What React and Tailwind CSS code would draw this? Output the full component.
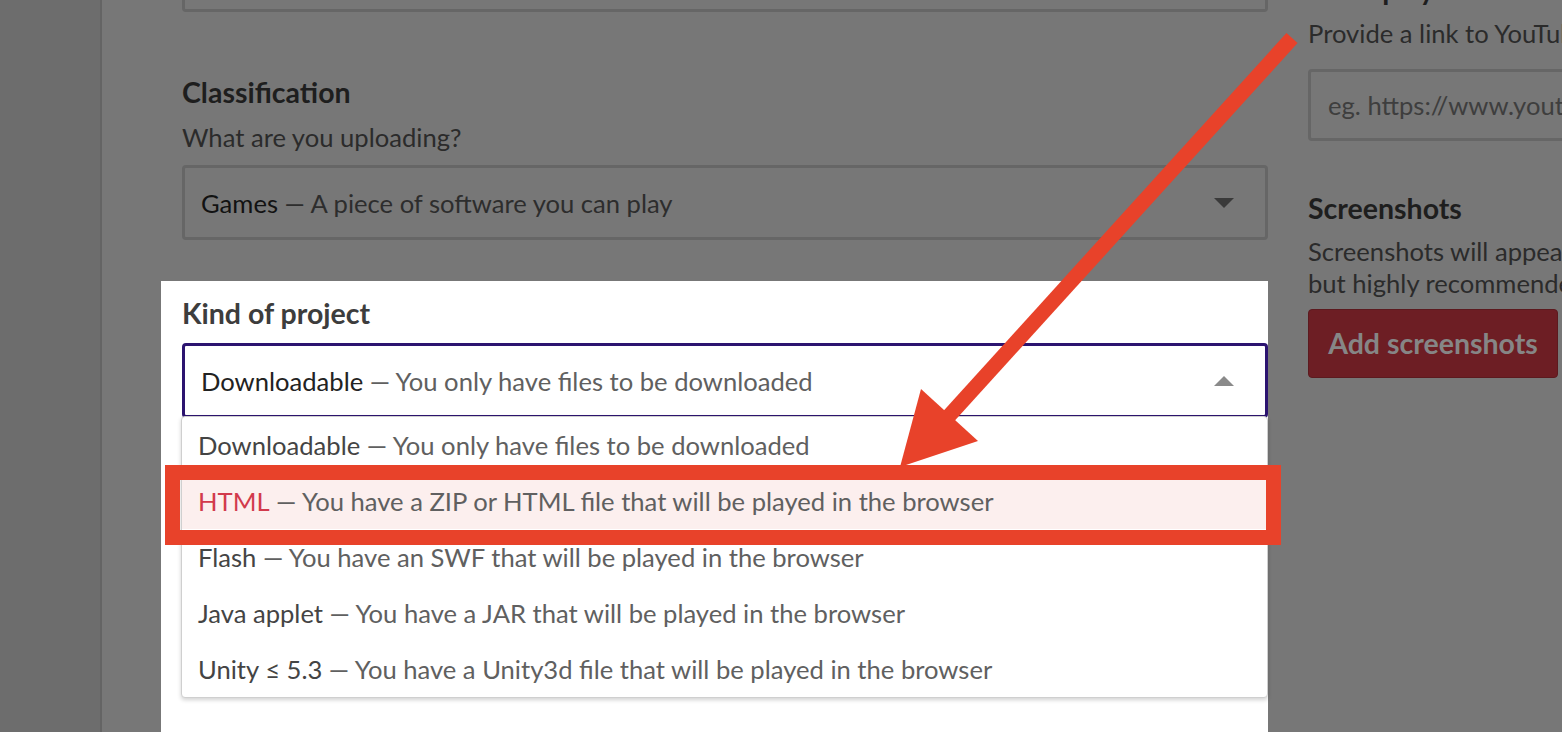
const kinds = [
  { label: "Downloadable", desc: "You only have files to be downloaded" },
  { label: "HTML", desc: "You have a ZIP or HTML file that will be played in the browser", active: true },
  { label: "Flash", desc: "You have an SWF that will be played in the browser" },
  { label: "Java applet", desc: "You have a JAR that will be played in the browser" },
  { label: "Unity ≤ 5.3", desc: "You have a Unity3d file that will be played in the browser" },
]

const Caret = ({ up, color }) => (
  <svg width="20" height="10" viewBox="0 0 20 10" className="shrink-0">
    <polygon points={up ? "0,10 20,10 10,0" : "0,0 20,0 10,10"} fill={color} />
  </svg>
)

const KindDropdown = () => (
  <div className="absolute left-[20px] top-[135px] w-[1087px] rounded-[4px] border border-[#cfcfcf] bg-white shadow-[0_2px_4px_rgba(0,0,0,0.18)]">
    {kinds.map((k) => (
      <div
        key={k.label}
        className={`flex h-[56px] items-center pl-4 text-[25.6px] leading-8 ${k.active ? "bg-[#fcefee]" : ""}`}
      >
        <span className={k.active ? "text-[#d23a4c]" : "text-[#444]"}>{k.label}</span>
        <span className="text-[#606060]">&nbsp;— {k.desc}</span>
      </div>
    ))}
  </div>
)

export default function App() {
  return (
    <div className="relative flex h-[732px] w-[1562px] overflow-hidden bg-[#777] font-['Lato',sans-serif]">
      <div className="w-[102px] shrink-0 border-r-2 border-[#646464] bg-[#6d6d6d]" />

      <div className="flex flex-1 gap-10 pl-[80px]">
        {/* left column */}
        <div className="flex w-[1086px] shrink-0 flex-col">
          <div className="h-[12px] rounded-b-[4px] border-x-[3px] border-b-[3px] border-[#666]" />

          <h2 className="mt-[64px] text-[28.5px] font-bold leading-8 text-[#1e1e1e]">Classification</h2>
          <p className="mt-[13px] text-[25.6px] leading-8 text-[#2b2b2b]">What are you uploading?</p>
          <div className="mt-[12px] flex h-[75px] items-center justify-between rounded-[4px] border-[3px] border-[#666] pl-4 pr-[31px] text-[25.6px] leading-8">
            <div>
              <span className="text-[#121212]">Games</span>
              <span className="text-[#2d2d2d]">&nbsp;— A piece of software you can play</span>
            </div>
            <Caret color="#3a3a3a" />
          </div>

          <div className="relative mt-[41px] -ml-[21px] flex-1 bg-white pl-[21px]">
            <h2 className="pt-[16px] text-[28.5px] font-bold leading-8 text-[#3d3d3d]">Kind of project</h2>
            <div className="mt-[14px] flex h-[75px] items-center justify-between rounded-[4px] border-[3px] border-[#2c1470] pl-4 pr-[31px] text-[25.6px] leading-8">
              <div>
                <span className="text-[#222]">Downloadable</span>
                <span className="text-[#606060]">&nbsp;— You only have files to be downloaded</span>
              </div>
              <Caret up color="#8a8a8a" />
            </div>
            <KindDropdown />
          </div>
        </div>

        {/* right column */}
        <div className="flex w-[560px] shrink-0 flex-col whitespace-nowrap">
          <h2 className="-mt-[27px] text-[28.5px] font-bold leading-8 text-[#1e1e1e]">Gameplay video or trailer</h2>
          <p className="mt-[12px] text-[25.6px] leading-8 text-[#2b2b2b]">Provide a link to YouTube or Vimeo.</p>
          <div className="mt-[20px] flex h-[72px] items-center rounded-[4px] border-[3px] border-[#666] pl-[17px] text-[25.6px] leading-8 text-[#3e3e3e]">
            eg. https://www.youtube.com/watch?v=5ykYk8RGvFk
          </div>

          <h2 className="mt-[51px] text-[28.5px] font-bold leading-8 text-[#1e1e1e]">Screenshots</h2>
          <p className="mt-[11px] text-[25.6px] leading-8 text-[#2b2b2b]">
            Screenshots will appear on your game's page. Optional
            <br />
            but highly recommended. Upload 3 to 5 for best results.
          </p>
          <button className="mt-[10px] flex h-[69px] w-[250px] items-center justify-center rounded-[4px] border border-[#5c1a1f] bg-[#6d1e24] text-[28.5px] font-bold text-[#868686]">
            Add screenshots
          </button>
        </div>
      </div>

      {/* annotation */}
      <div className="absolute left-[165px] top-[465px] h-[80px] w-[1116px] border-[15px] border-[#e8422a]" />
      <svg className="pointer-events-none absolute inset-0" width="1562" height="732" viewBox="0 0 1562 732">
        <line x1="1292" y1="38" x2="948" y2="417" stroke="#e8422a" strokeWidth="15" />
        <polygon points="900,467 921,389 978,441" fill="#e8422a" />
      </svg>
    </div>
  )
}
